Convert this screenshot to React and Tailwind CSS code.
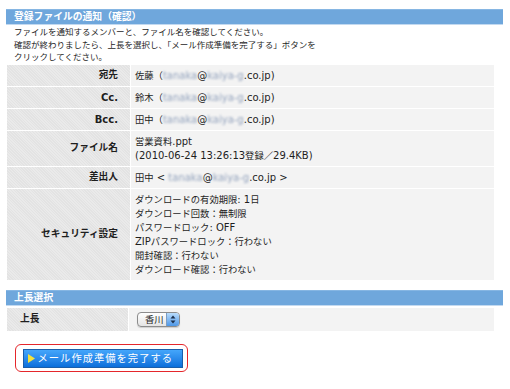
const CJK = /([\u3000-\u30ff\u4e00-\u9fff\uff00-\uffef]+)/;

function J({ s, c = "text-[9.3px]" }) {
  return s
    .split(CJK)
    .map((p, i) => (i % 2 ? <span key={i} className={c}>{p}</span> : <span key={i}>{p}</span>));
}

function Blur({ children }) {
  return <span className="blur-[0.9px] text-[#93a3bd]">{children}</span>;
}

function Mail({ open = "（", close = ")" }) {
  return (
    <>
      <span className="text-[9.3px]">{open}</span>
      <Blur>tanaka</Blur>@<Blur>kaiya-g</Blur>.co.jp{close}
    </>
  );
}

function Bar({ children }) {
  return (
    <div className="ml-[6px] w-[497px] h-[16px] bg-[#6fa7dc] border-t border-[#86b6e3] border-b border-b-[#c2d9f0] pl-[8px] text-white font-bold leading-[14px] text-[9.8px]">
      {children}
    </div>
  );
}

const hatch =
  "bg-[repeating-linear-gradient(45deg,#e3e3e3_0px,#e3e3e3_1px,#eaeaea_1px,#eaeaea_2px)]";

function Row({ label, children }) {
  return (
    <>
      <div className={"flex items-center justify-end pr-[12px] font-bold " + hatch}>
        <J s={label} c="text-[9.7px]" />
      </div>
      <div className="bg-[#f3f3f3] pl-[4px] py-[3.5px] leading-[14px]">{children}</div>
    </>
  );
}

export default function App() {
  return (
    <div className="w-[510px] h-[389px] overflow-hidden bg-white pt-[9px] text-[#1e1e1e] text-[10px] font-['DejaVu_Sans','Noto_Sans_CJK_JP',sans-serif]">
      <Bar>登録ファイルの通知（確認）</Bar>

      <div className="pl-[14px] pt-[1px] text-[8.5px] leading-[12.5px]">
        <div>ファイルを通知するメンバーと、ファイル名を確認してください。</div>
        <div>確認が終わりましたら、上長を選択し、「メール作成準備を完了する」ボタンを</div>
        <div>クリックしてください。</div>
      </div>

      <div className="mt-[1.5px] ml-[7px] w-[487px] grid grid-cols-[123px_1fr] gap-px bg-white">
        <Row label="宛先">
          <J s="佐藤" />
          <Mail />
        </Row>
        <Row label="Cc.">
          <J s="鈴木" />
          <Mail />
        </Row>
        <Row label="Bcc.">
          <J s="田中" />
          <Mail />
        </Row>
        <Row label="ファイル名">
          <div>
            <J s="営業資料.ppt" />
          </div>
          <div>
            <J s="(2010-06-24 13:26:13登録／29.4KB)" />
          </div>
        </Row>
        <Row label="差出人">
          <J s="田中" /> &lt; <Blur>tanaka</Blur>@<Blur>kaiya-g</Blur>.co.jp &gt;
        </Row>
        <Row label="セキュリティ設定">
          <div><J s="ダウンロードの有効期限: 1日" /></div>
          <div><J s="ダウンロード回数：無制限" /></div>
          <div><J s="パスワードロック: OFF" /></div>
          <div><J s="ZIPパスワードロック：行わない" /></div>
          <div><J s="開封確認：行わない" /></div>
          <div><J s="ダウンロード確認：行わない" /></div>
        </Row>
      </div>

      <div className="mt-[10px]">
        <Bar>上長選択</Bar>
      </div>

      <div className="mt-[2px] ml-[7px] w-[487px] grid grid-cols-[121px_1fr] gap-px bg-white">
        <div className={"h-[23px] flex items-center pl-[13px] font-bold text-[9.7px] " + hatch}>上長</div>
        <div className="bg-[#f3f3f3] h-[23px] flex items-center pl-[8px]">
          <div className="flex h-[15px] w-[43px] rounded-[4px] border border-[#8c8c8c] bg-gradient-to-b from-white to-[#e4e4e4] overflow-hidden shadow-[0_1px_1px_rgba(0,0,0,0.15)]">
            <div className="flex-1 pl-[7px] text-[9.3px] leading-[13px]">香川</div>
            <div className="w-[13px] border-l border-[#7c9ec4] bg-gradient-to-b from-[#b9dcfb] to-[#4d97e6] flex items-center justify-center">
              <svg width="6" height="9" viewBox="0 0 6 9">
                <polygon points="3,0.5 5.5,3.5 0.5,3.5" fill="#1c2f4a" />
                <polygon points="3,8.5 5.5,5.5 0.5,5.5" fill="#1c2f4a" />
              </svg>
            </div>
          </div>
        </div>
      </div>

      <div className="mt-[13px] ml-[15px] inline-flex border-[1.5px] border-[#e5262b] rounded-[6px] pl-[6.5px] pr-[4.5px] py-[3.5px]">
        <div className="w-[160px] h-[19px] flex items-center pl-[4px] bg-gradient-to-b from-[#44a6fb] to-[#0a6fdb] border border-[#1b5ea9]">
          <svg width="7" height="9" viewBox="0 0 7 9">
            <polygon points="0,0 7,4.5 0,9" fill="#f3e23b" />
          </svg>
          <span className="ml-[3px] text-white text-[10.3px] tracking-[1px] leading-[17px]">メール作成準備を完了する</span>
        </div>
      </div>
    </div>
  );
}
